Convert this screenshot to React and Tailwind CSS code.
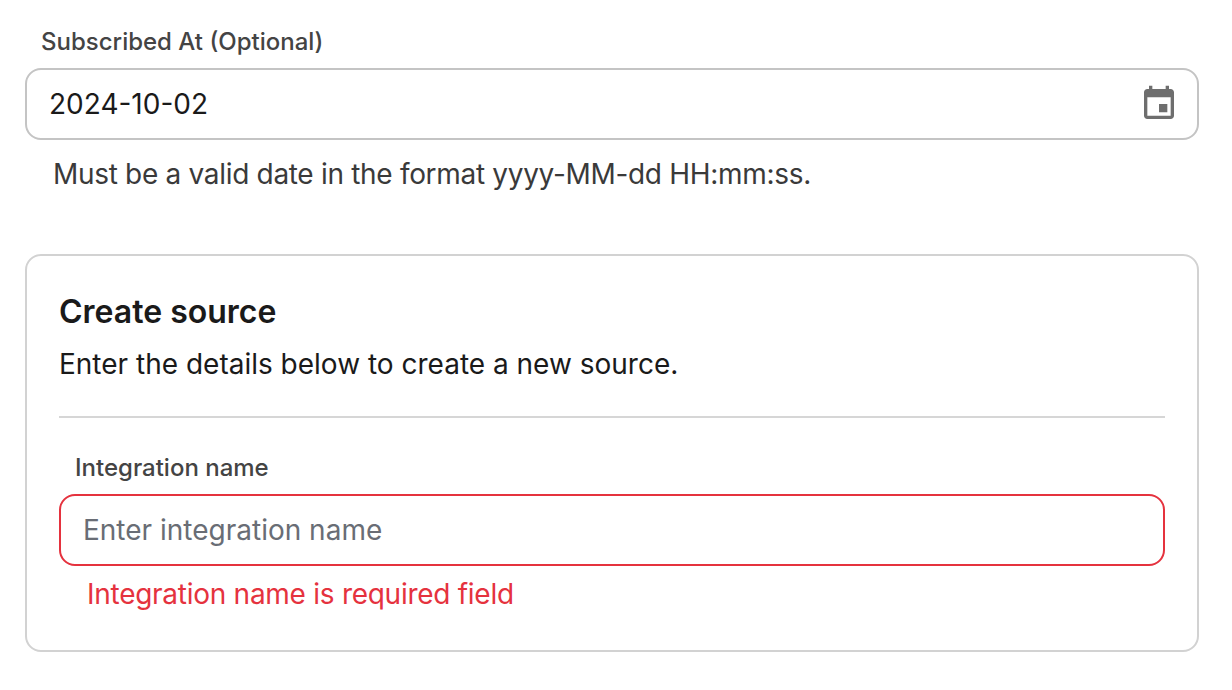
export default function App() {
  return (
    <div className="min-h-[690px] bg-white pl-[25px] pr-[33px] pt-[26px] font-['Inter',sans-serif]">
      {/* Subscribed at */}
      <div>
        <label className="block pl-4 text-[24px] leading-[32px] font-medium text-[#444444]">
          Subscribed At (Optional)
        </label>
        <div className="mt-[10px] flex h-[72px] items-center justify-between rounded-2xl border-2 border-[#c4c4c4] bg-white pl-[22px] pr-[18px]">
          <input
            readOnly
            value="2024-10-02"
            className="w-full bg-transparent text-[28px] text-[#1a1a1a] outline-none"
          />
          <svg viewBox="0 0 24 24" className="h-10 w-10 shrink-0 fill-[#6e6e6e]">
            <path d="M17 12h-5v5h5v-5zM16 1v2H8V1H6v2H5c-1.11 0-1.99.9-1.99 2L3 19c0 1.1.89 2 2 2h14c1.1 0 2-.9 2-2V5c0-1.1-.9-2-2-2h-1V1h-2zm3 18H5V8h14v11z" />
          </svg>
        </div>
        <p className="mt-[16px] pl-7 text-[28px] leading-[36px] tracking-[-0.31px] text-[#3a3a3a]">
          Must be a valid date in the format yyyy-MM-dd HH:mm:ss.
        </p>
      </div>

      {/* Create source card */}
      <div className="mt-[62px] h-[398px] rounded-2xl border-2 border-[#d2d2d2] px-8 pt-[36px]">
        <h2 className="text-[32px] leading-[40px] font-semibold text-[#1a1a1a]">Create source</h2>
        <p className="mt-[14px] text-[28px] leading-[36px] text-[#1a1a1a]">
          Enter the details below to create a new source.
        </p>
        <div className="mt-[34px] border-t-2 border-[#d6d6d6]" />
        <label className="mt-[34px] block pl-4 text-[24px] leading-[32px] font-medium text-[#444444]">
          Integration name
        </label>
        <input
          placeholder="Enter integration name"
          className="mt-[10px] block h-[72px] w-full rounded-2xl border-2 border-[#e5323e] px-[22px] text-[28px] outline-none placeholder:text-[#696d75]"
        />
        <p className="mt-[10px] pl-7 text-[28px] leading-[36px] tracking-[-0.27px] text-[#e5323e]">
          Integration name is required field
        </p>
      </div>
    </div>
  );
}
